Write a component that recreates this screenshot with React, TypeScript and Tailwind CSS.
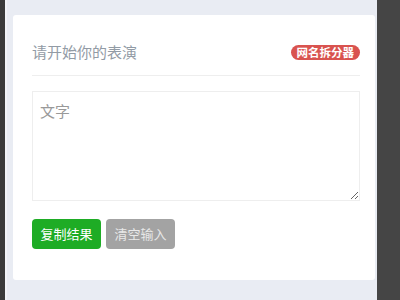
import React from "react";

export default function App() {
  const font = { fontFamily: '"Microsoft YaHei", "Noto Sans CJK SC", "Noto Sans", sans-serif' };
  return (
    <div className="flex h-[300px] w-[400px] overflow-hidden" style={font}>
      <div className="w-[5px] bg-[#3a3a3a]" />
      <div className="w-[2px] bg-[#f2f3f7]" />
      <div className="flex-1 bg-[#e9ecf3] pl-[6px] pr-[2px] pt-[15px] pb-[20px]">
        <div className="h-full rounded-[3px] bg-white pl-[19px] pr-[15px] pt-[29px]">
          <div className="flex h-[32px] items-start justify-between border-b border-[#eeeeee]">
            <div className="text-[15px] leading-[16px] text-[#929ba5]">请开始你的表演</div>
            <div className="mt-[1px] rounded-full bg-[#d9534f] px-[6px] text-[11.5px] font-bold leading-[15px] text-white">
              网名拆分器
            </div>
          </div>
          <textarea
            className="mt-[15px] block h-[110px] w-full resize-y border border-[#eeeeee] px-[7px] pt-[8px] pb-[10px] text-[15px] leading-[22px] text-[#555] placeholder:text-[#999] outline-none"
            placeholder="文字"
            style={font}
          />
          <div className="mt-[18px] flex gap-[5px]">
            <button
              className="h-[30px] w-[69px] rounded-[4px] bg-[#1eac25] text-[13px] text-white"
              style={font}
            >
              复制结果
            </button>
            <button
              className="h-[30px] w-[69px] rounded-[4px] bg-[#a3a3a3] text-[13px] text-[#e8e8e8]"
              style={font}
            >
              清空输入
            </button>
          </div>
        </div>
      </div>
      <div className="w-[23px] bg-[#454545]" />
    </div>
  );
}
